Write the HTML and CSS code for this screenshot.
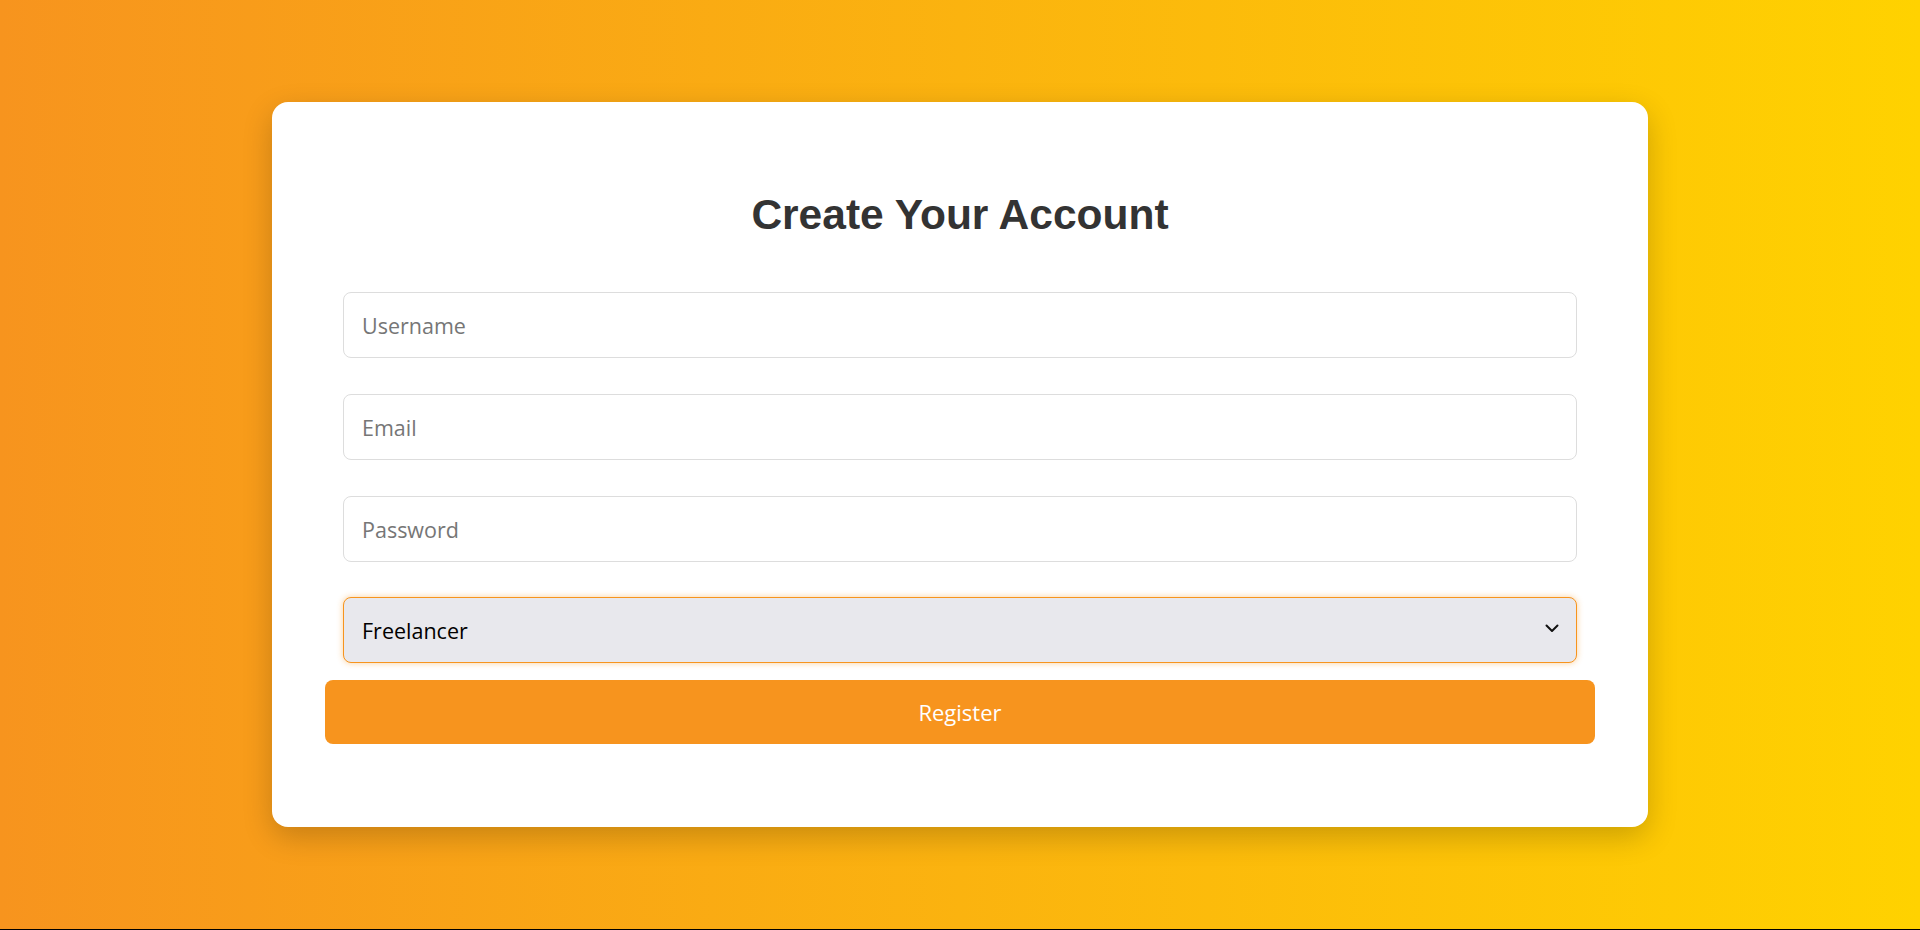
FILE: index.html
```html
<!DOCTYPE html>
<html lang="en">
<head>
<meta charset="utf-8">
<title>Create Your Account</title>
<link rel="stylesheet" href="styles.css">
</head>
<body>
  <div class="card">
    <h2 class="title">Create Your Account</h2>
    <form class="form">
      <input class="field" type="text" placeholder="Username">
      <input class="field" type="email" placeholder="Email">
      <input class="field" type="password" placeholder="Password">
      <div class="select-wrap">
        <select class="field select">
          <option>Freelancer</option>
          <option>Client</option>
        </select>
        <svg class="chevron" width="14" height="9" viewBox="0 0 14 9"><path d="M1.5 1.5 L7 7 L12.5 1.5" fill="none" stroke="#111" stroke-width="2" stroke-linecap="round" stroke-linejoin="round"/></svg>
      </div>
      <button class="btn" type="button">Register</button>
    </form>
  </div>
</body>
</html>
```

FILE: styles.css
```css
html {
  background: #000;
}
body {
  margin: 0;
  height: 929px;
  background: linear-gradient(to right, #f7941e, #ffd200);
  display: flex;
  align-items: center;
  justify-content: center;
  font-family: "Open Sans", "Noto Sans", sans-serif;
}
.card {
  width: 1376px;
  box-sizing: border-box;
  background: #fff;
  border-radius: 16px;
  box-shadow: 0 10px 30px rgba(0, 0, 0, 0.2);
  padding: 92px 53px 83px;
}
.title {
  margin: 0 0 56px;
  text-align: center;
  font-family: "Liberation Sans", Arial, sans-serif;
  font-weight: 700;
  font-size: 42.5px;
  line-height: 42px;
  color: #333;
}
.form {
  display: flex;
  flex-direction: column;
}
.field {
  display: block;
  box-sizing: border-box;
  width: calc(100% - 36px);
  margin: 0 18px 36px;
  height: 66px;
  padding: 0 18px;
  border: 1px solid #ddd;
  border-radius: 8px;
  font-family: "Open Sans", "Noto Sans", sans-serif;
  font-size: 21.5px;
  color: #111;
  background: #fff;
  outline: none;
}
.field::placeholder {
  color: #767676;
}
.select-wrap {
  position: relative;
  margin-top: -1px;
}
.select {
  -webkit-appearance: none;
  appearance: none;
  margin-bottom: 17px;
  background: #e8e8ed;
  border-color: #f7941d;
  box-shadow: 0 0 6px rgba(247, 148, 29, 0.45);
  color: #000;
}
.chevron {
  position: absolute;
  right: 36px;
  top: 27px;
}
.btn {
  height: 64px;
  border: none;
  border-radius: 8px;
  background: #f7941e;
  color: #fff;
  font-family: "Open Sans", "Noto Sans", sans-serif;
  font-size: 22px;
  cursor: pointer;
}
```
